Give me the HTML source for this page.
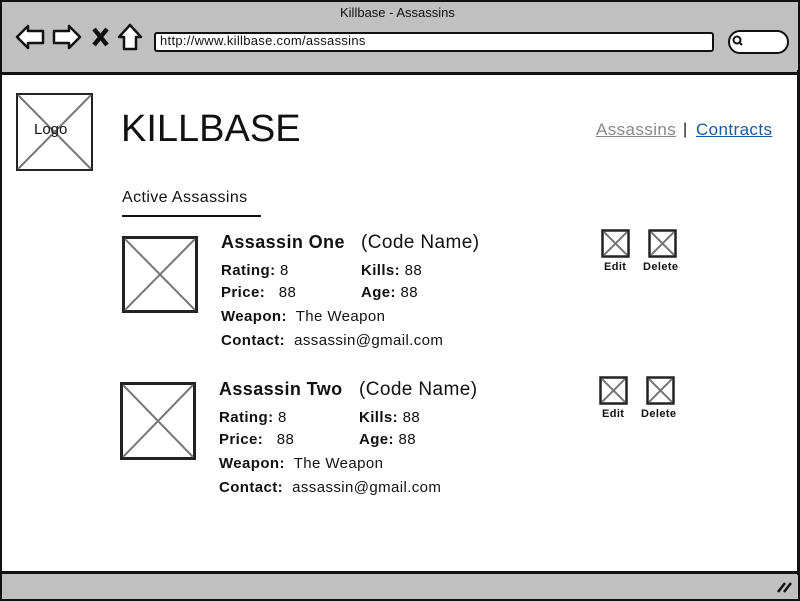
<!DOCTYPE html>
<html><head><style>
body{margin:0;width:800px;height:600px;position:relative;overflow:hidden;background:#fff;font-family:"Liberation Sans",sans-serif;color:#111}
.a{position:absolute;white-space:nowrap}
.b{font-weight:bold}
.t{letter-spacing:0.4px}
svg.x{position:absolute}
</style></head><body>
<div class="a" style="left:0;top:0;width:796px;height:70px;background:#c0c0c0;border:2px solid #111;border-bottom:3px solid #111"></div>
<div class="a" style="left:0;top:571px;width:796px;height:25px;background:#c0c0c0;border:2px solid #111;border-top:3px solid #111"></div>
<div class="a" style="left:0;top:70px;width:2px;height:505px;background:#111"></div>
<div class="a" style="left:797px;top:70px;width:3px;height:505px;background:#111"></div>
<div class="a" style="left:340px;top:5px;font-size:13px">Killbase - Assassins</div>
<svg class="x" style="left:14px;top:22px" width="130" height="30" viewBox="0 0 130 30" fill="#fff" stroke="#111" stroke-width="2.5" stroke-linejoin="round">
<path d="M3 15 L14 4 L14 9 L29 9 L29 21 L14 21 L14 26 Z"/>
<path d="M66 15 L55 4 L55 9 L40 9 L40 21 L55 21 L55 26 Z"/>
<path d="M80 7 L93 23 M93 7 L80 23" stroke-width="4.5"/>
<path d="M105 15 L116 3 L127 15 L122 15 L122 27 L110 27 L110 15 Z"/>
</svg>
<div class="a" style="left:154px;top:32px;width:556px;height:16px;background:#fff;border:2px solid #111;border-radius:3px"></div>
<div class="a" style="left:160px;top:33px;font-size:13px;letter-spacing:0.3px">http://www.killbase.com/assassins</div>
<div class="a" style="left:728px;top:30px;width:57px;height:20px;background:#fff;border:2px solid #111;border-radius:12px"></div>
<svg class="x" style="left:731px;top:34px" width="14" height="14"><circle cx="6" cy="6" r="3.5" fill="none" stroke="#111" stroke-width="2"/><path d="M8 8 L11 11" stroke="#111" stroke-width="2"/></svg>
<svg class="x" style="left:776px;top:580px" width="18" height="14"><path d="M2 12 L9 3 M8 12 L15 3" stroke="#111" stroke-width="2.5"/></svg>

<svg class="x" style="left:16px;top:93px" width="77" height="78"><rect x="1" y="1" width="75" height="76" fill="#fff" stroke="#222" stroke-width="2"/><path d="M2 2 L75 76 M75 2 L2 76" stroke="#777" stroke-width="2"/></svg>
<div class="a" style="left:34px;top:121px;font-size:15px">Logo</div>
<div class="a" style="left:121px;top:108px;font-size:38px">KILLBASE</div>
<div class="a t" style="left:596px;top:120px;font-size:17px;color:#888;text-decoration:underline">Assassins</div>
<div class="a" style="left:683px;top:121px;font-size:16px">|</div>
<div class="a t" style="left:696px;top:120px;font-size:17px;color:#1a5aa0;text-decoration:underline">Contracts</div>
<div class="a t" style="left:122px;top:189px;font-size:16px">Active Assassins</div>
<div class="a" style="left:122px;top:215px;width:139px;height:2px;background:#111"></div>

<svg class="x" style="left:122px;top:236px" width="76" height="77"><rect x="1.5" y="1.5" width="73" height="74" fill="#fff" stroke="#222" stroke-width="3"/><path d="M3 3 L73 74 M73 3 L3 74" stroke="#777" stroke-width="2"/></svg>
<div class="a b t" style="left:221px;top:232px;font-size:18px">Assassin One</div>
<div class="a t" style="left:361px;top:232px;font-size:19px">(Code Name)</div>
<div class="a t" style="left:221px;top:262px;font-size:15px"><b>Rating:</b> 8</div>
<div class="a t" style="left:361px;top:262px;font-size:15px"><b>Kills:</b> 88</div>
<div class="a t" style="left:221px;top:284px;font-size:15px"><b>Price:</b> &nbsp; 88</div>
<div class="a t" style="left:361px;top:284px;font-size:15px"><b>Age:</b> 88</div>
<div class="a t" style="left:221px;top:308px;font-size:15px"><b>Weapon:</b>&nbsp; The Weapon</div>
<div class="a t" style="left:221px;top:332px;font-size:15px"><b>Contact:</b>&nbsp; assassin@gmail.com</div>
<svg class="x" style="left:601px;top:229px" width="29" height="29"><rect x="1.5" y="1.5" width="26" height="26" fill="#fff" stroke="#222" stroke-width="2.5"/><path d="M3 3 L26 26 M26 3 L3 26" stroke="#777" stroke-width="2"/></svg>
<svg class="x" style="left:648px;top:229px" width="29" height="29"><rect x="1.5" y="1.5" width="26" height="26" fill="#fff" stroke="#222" stroke-width="2.5"/><path d="M3 3 L26 26 M26 3 L3 26" stroke="#777" stroke-width="2"/></svg>
<div class="a b t" style="left:604px;top:261px;font-size:11px">Edit</div>
<div class="a b t" style="left:643px;top:261px;font-size:11px">Delete</div>

<svg class="x" style="left:120px;top:382px" width="76" height="78"><rect x="1.5" y="1.5" width="73" height="75" fill="#fff" stroke="#222" stroke-width="3"/><path d="M3 3 L73 75 M73 3 L3 75" stroke="#777" stroke-width="2"/></svg>
<div class="a b t" style="left:219px;top:379px;font-size:18px">Assassin Two</div>
<div class="a t" style="left:359px;top:379px;font-size:19px">(Code Name)</div>
<div class="a t" style="left:219px;top:409px;font-size:15px"><b>Rating:</b> 8</div>
<div class="a t" style="left:359px;top:409px;font-size:15px"><b>Kills:</b> 88</div>
<div class="a t" style="left:219px;top:431px;font-size:15px"><b>Price:</b> &nbsp; 88</div>
<div class="a t" style="left:359px;top:431px;font-size:15px"><b>Age:</b> 88</div>
<div class="a t" style="left:219px;top:455px;font-size:15px"><b>Weapon:</b>&nbsp; The Weapon</div>
<div class="a t" style="left:219px;top:479px;font-size:15px"><b>Contact:</b>&nbsp; assassin@gmail.com</div>
<svg class="x" style="left:599px;top:376px" width="29" height="29"><rect x="1.5" y="1.5" width="26" height="26" fill="#fff" stroke="#222" stroke-width="2.5"/><path d="M3 3 L26 26 M26 3 L3 26" stroke="#777" stroke-width="2"/></svg>
<svg class="x" style="left:646px;top:376px" width="29" height="29"><rect x="1.5" y="1.5" width="26" height="26" fill="#fff" stroke="#222" stroke-width="2.5"/><path d="M3 3 L26 26 M26 3 L3 26" stroke="#777" stroke-width="2"/></svg>
<div class="a b t" style="left:602px;top:408px;font-size:11px">Edit</div>
<div class="a b t" style="left:641px;top:408px;font-size:11px">Delete</div>
</body></html>
